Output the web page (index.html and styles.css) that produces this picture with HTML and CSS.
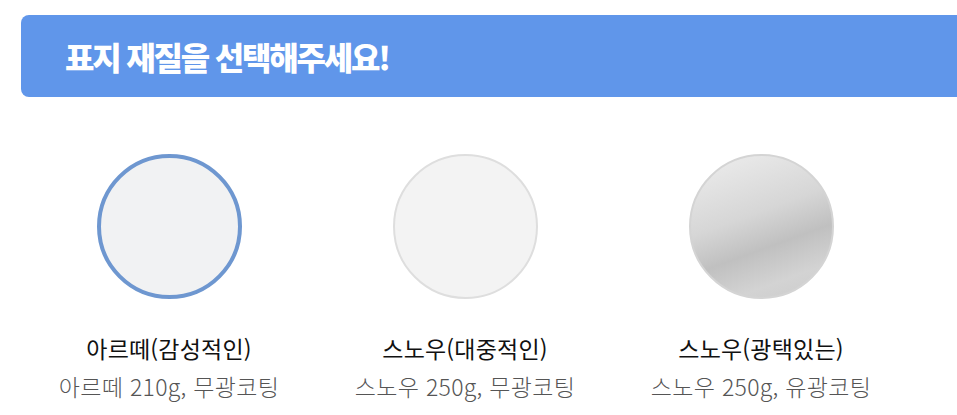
FILE: index.html
```html
<!DOCTYPE html>
<html lang="ko">

<head>
    <meta charset="UTF-8">
    <meta name="viewport" content="width=device-width, initial-scale=1.0">
    <title>표지 재질 선택</title>
    <link rel="stylesheet" href="styles.css">
</head>

<body>
    <div class="page">
        <h2 class="section-title">표지 재질을 선택해주세요!</h2>

        <div class="paper-list">
            <div class="paper-item selected">
                <div class="swatch swatch-arte"></div>
                <div class="paper-name">아르떼(감성적인)</div>
                <div class="paper-desc">아르떼 210g, 무광코팅</div>
            </div>
            <div class="paper-item">
                <div class="swatch swatch-snow"></div>
                <div class="paper-name">스노우(대중적인)</div>
                <div class="paper-desc">스노우 250g, 무광코팅</div>
            </div>
            <div class="paper-item">
                <div class="swatch swatch-gloss"></div>
                <div class="paper-name">스노우(광택있는)</div>
                <div class="paper-desc">스노우 250g, 유광코팅</div>
            </div>
        </div>
    </div>
</body>

</html>
```

FILE: styles.css
```css
body {
    margin: 0;
    background: #fff;
    font-family: "Noto Sans CJK KR", "Noto Sans", sans-serif;
}

.page {
    padding: 15px 0 0 21px;
}

.section-title {
    margin: 0;
    height: 82px;
    display: flex;
    align-items: center;
    padding-left: 44px;
    background: #6096ea;
    border-radius: 8px 0 0 8px;
    color: #fff;
    font-size: 32px;
    font-weight: 900;
    letter-spacing: -2.2px;
}

.paper-list {
    display: flex;
    margin-top: 57px;
}

.paper-item {
    width: 296px;
    display: flex;
    flex-direction: column;
    align-items: center;
    cursor: pointer;
}

.swatch {
    width: 145px;
    height: 145px;
    border-radius: 50%;
    box-sizing: border-box;
}

.swatch-arte {
    background: #f1f2f3;
    border: 4px solid #6e97d0;
}

.swatch-snow {
    background: #f3f3f3;
    border: 2px solid #dedede;
}

.swatch-gloss {
    background: linear-gradient(160deg, #eeeeee 0%, #d6d6d6 42%, #c0c0c0 62%, #d3d3d3 82%, #cbcbcb 100%);
    border: 2px solid #d4d4d4;
}

.paper-name {
    margin-top: 33px;
    font-size: 23px;
    line-height: 32px;
    font-weight: 400;
    color: #111;
    letter-spacing: 0.2px;
}

.paper-desc {
    margin-top: 6px;
    font-size: 23px;
    line-height: 32px;
    font-weight: 300;
    color: #555;
    letter-spacing: 0.3px;
}
```
